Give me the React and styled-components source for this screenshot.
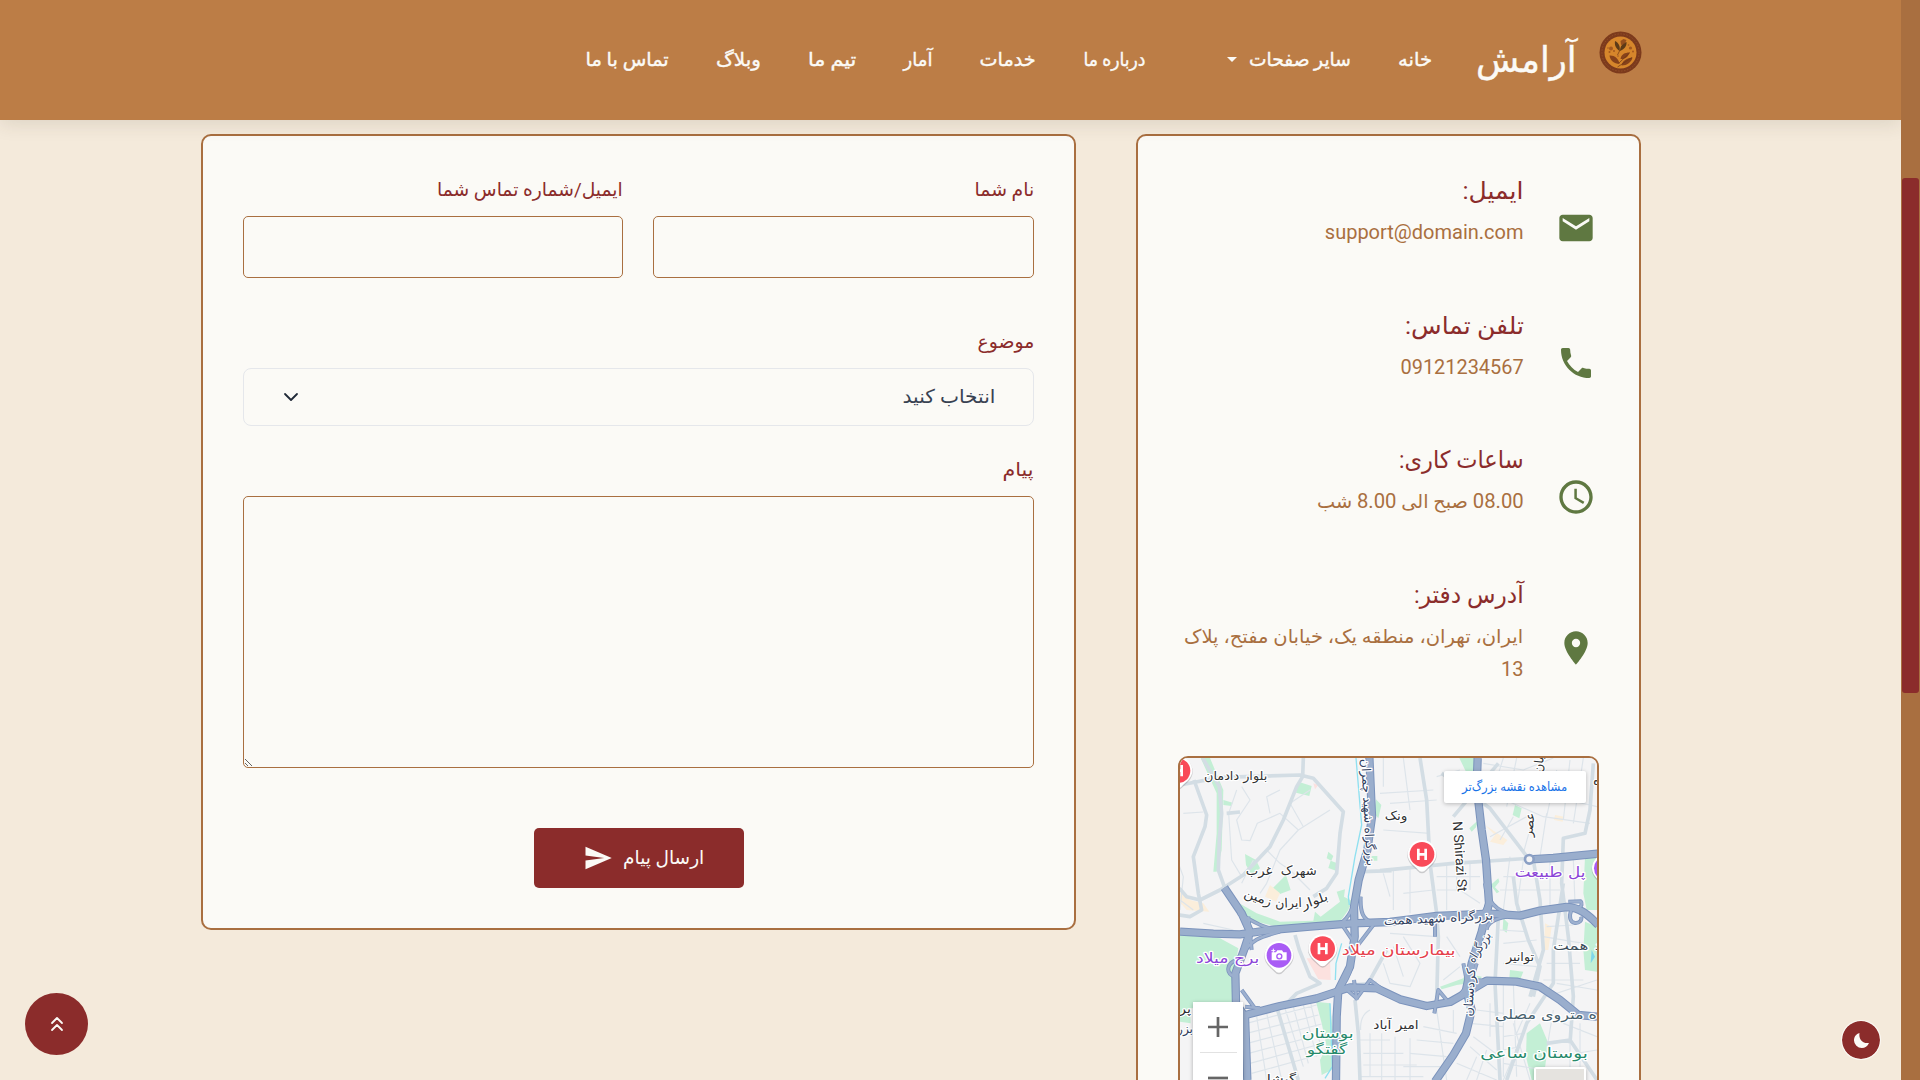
import React, { useLayoutEffect, useRef, useState } from "react";
import styled, { createGlobalStyle } from "styled-components";
import { MdEmail, MdPhone, MdAccessTime, MdLocationOn, MdSend } from "react-icons/md";

const c = {
  cream: "#f4eadb",
  paper: "#fbfaf6",
  copper: "#a96f40",
  header: "#bc7d46",
  wine: "#8b2c2b",
  green: "#5f7841",
  ink: "#374151",
};

const Global = createGlobalStyle`
  * { box-sizing: border-box; }
  html, body { margin: 0; height: 1080px; overflow: hidden; }
  body { font-family: Roboto, "DejaVu Sans", sans-serif; background: ${c.cream}; }
`;

const Page = styled.div`
  display: flex;
  direction: rtl;
  width: 1920px;
  height: 1080px;
  overflow: hidden;
  background: ${c.cream};
`;

const View = styled.div`
  position: relative;
  flex: 1;
  display: flex;
  flex-direction: column;
  min-width: 0;
  overflow: hidden;
`;

const ScrollTrack = styled.div`
  flex: none;
  width: 19px;
  height: 1080px;
  padding-top: 178px;
  background: ${c.copper};
`;

const ScrollThumb = styled.div`
  height: 515px;
  margin: 0 1px;
  background: ${c.wine};
  border-radius: 3px;
`;

/* ---------- text that occupies an exact width ---------- */
const FitBox = styled.span`
  display: inline-block;
  width: ${(p) => p.$w}px;
  white-space: nowrap;
`;
const FitInner = styled.span`
  display: inline-block;
  transform-origin: right center;
  white-space: nowrap;
`;

function Fit({ w, children }) {
  const ref = useRef(null);
  const [scale, setScale] = useState(1);
  useLayoutEffect(() => {
    setScale(w / ref.current.offsetWidth);
  }, [w]);
  return (
    <FitBox $w={w}>
      <FitInner ref={ref} style={{ transform: `scaleX(${scale})` }}>
        {children}
      </FitInner>
    </FitBox>
  );
}

/* ---------- header ---------- */
const Header = styled.header`
  display: flex;
  align-items: center;
  flex: none;
  height: 120px;
  padding-right: 259px;
  background: ${c.header};
  box-shadow: 0 4px 18px rgba(60, 50, 30, 0.12);
  z-index: 2;
`;

const Logo = styled.svg`
  flex: none;
  width: 43px;
  height: 43px;
  margin-bottom: 15px;
`;

const Brand = styled.div`
  margin: 0 22px 1px 43px;
  font-size: 36px;
  line-height: 60px;
  color: ${c.paper};
  -webkit-text-stroke: 0.4px ${c.paper};
`;

const Nav = styled.nav`
  display: flex;
  align-items: center;
  margin: 0 -22.5px 1px 0;
`;

const NavItem = styled.a`
  display: flex;
  align-items: center;
  padding: 0 23.7px;
  font-size: 19px;
  line-height: 30px;
  color: ${c.paper};
  -webkit-text-stroke: 0.4px ${c.paper};
  ${(p) => p.$wide && "padding-left: 58px;"}
`;

const Caret = styled.i`
  width: 0;
  height: 0;
  margin-right: 11px;
  border: 5px solid transparent;
  border-top-color: ${c.paper};
  border-bottom: 0;
`;

/* ---------- content ---------- */
const Main = styled.main`
  display: flex;
  align-items: flex-start;
  gap: 60px;
  padding: 14px 260px 0 201px;
`;

const Card = styled.section`
  width: ${(p) => p.$w}px;
  height: ${(p) => p.$h}px;
  padding: 40px;
  border: 2px solid ${c.copper};
  border-radius: 10px;
  background: ${c.paper};
`;

const InfoList = styled.div`
  display: flex;
  flex-direction: column;
  gap: 30.5px;
  margin-bottom: 40px;
`;

const InfoItem = styled.div`
  display: flex;
  align-items: center;
  gap: 32.5px;
  height: ${(p) => (p.$tall ? 136 : 104)}px;
  padding-right: 3px;
  color: ${c.green};
  svg { flex: none; }
`;

const InfoText = styled.div`
  align-self: flex-start;
`;

const InfoTitle = styled.h4`
  margin: 0 0 11px;
  font-size: 24px;
  font-weight: 400;
  line-height: 30px;
  color: ${c.wine};
`;

const InfoLine = styled.div`
  font-size: ${(p) => (p.$latin ? 20 : 19)}px;
  line-height: ${(p) => (p.$tall ? 32 : 31)}px;
  color: ${c.copper};
  big { font-size: 20px; }
`;

/* ---------- form ---------- */
const Row = styled.div`
  display: flex;
  gap: 30px;
  margin-bottom: 50px;
`;

const Field = styled.div`
  display: flex;
  flex-direction: column;
  flex: ${(p) => (p.$w ? "none" : 1)};
  width: ${(p) => (p.$w ? `${p.$w}px` : "auto")};
  margin-bottom: ${(p) => p.$mb || 0}px;
`;

const Label = styled.label`
  height: 28px;
  margin-bottom: 12px;
  font-size: 19px;
  line-height: 28px;
  color: ${c.wine};
`;

const Input = styled.input`
  width: 100%;
  height: 62px;
  border: 1px solid ${c.copper};
  border-radius: 5px;
  background: transparent;
  outline: none;
`;

const Select = styled.div`
  display: flex;
  align-items: center;
  justify-content: space-between;
  height: 58px;
  padding: 0 38px 1px 39px;
  border: 1px solid #e5e7eb;
  border-radius: 8px;
  font-size: 19px;
  line-height: 28px;
  color: ${c.ink};
`;

const Area = styled.textarea`
  display: block;
  width: 100%;
  height: 272px;
  border: 1px solid ${c.copper};
  border-radius: 5px;
  background: transparent;
  resize: both;
  outline: none;
`;

const Submit = styled.button`
  display: flex;
  align-items: center;
  gap: 10px;
  width: 210px;
  height: 60px;
  margin: 60px 290.5px 0 auto;
  padding: 0 39.500px 0 0;
  border: 0;
  border-radius: 5px;
  background: ${c.wine};
  color: ${c.paper};
  font: 19px Roboto, "DejaVu Sans", sans-serif;
  line-height: 28px;
`;

/* ---------- map ---------- */
const MapFrame = styled.div`
  position: relative;
  width: 421px;
  height: 450px;
  border: 2px solid ${c.copper};
  border-radius: 10px;
  overflow: hidden;
  background: #f4f4f5;
`;

const MapSvg = styled.svg`
  display: block;
  width: 417px;
  height: 322px;
  direction: ltr;
  text { font-family: "DejaVu Sans", sans-serif; paint-order: stroke; stroke: #fff; stroke-width: 7px; stroke-linejoin: round; }
`;

const BigMapLink = styled.a`
  position: absolute;
  top: 13px;
  right: 11px;
  display: flex;
  align-items: center;
  justify-content: center;
  width: 142px;
  height: 32px;
  border-radius: 2px;
  background: #fff;
  box-shadow: 0 1px 4px rgba(0, 0, 0, 0.25);
  font-size: 12.5px;
  color: #1a73e8;
`;

const ZoomBox = styled.div`
  position: absolute;
  top: 244px;
  left: 13px;
  display: flex;
  flex-direction: column;
  align-items: center;
  width: 50px;
  height: 101px;
  background: #fff;
  box-shadow: 0 1px 4px rgba(0, 0, 0, 0.3);
  svg { display: block; width: 50px; height: 50px; }
`;

const ZoomRule = styled.div`
  flex: none;
  width: 37px;
  height: 1px;
  background: #e2e2e2;
`;

const Layers = styled.div`
  position: absolute;
  top: 309px;
  right: 11px;
  width: 52px;
  height: 52px;
  border: 2px solid #fff;
  border-radius: 2px;
  background: #e5e3df;
  box-shadow: 0 1px 4px rgba(0, 0, 0, 0.3);
`;

/* ---------- floating buttons ---------- */
const Round = styled.button`
  position: absolute;
  display: flex;
  align-items: center;
  justify-content: center;
  padding: 0;
  border: ${(p) => (p.$ring ? "1px solid rgba(255,255,255,.7)" : "0")};
  border-radius: 50%;
  background: ${c.wine};
  background-clip: padding-box;
  color: ${c.paper};
`;
const TopButton = styled(Round)`
  left: 25px;
  top: 993px;
  width: 63px;
  height: 62px;
`;
const DarkButton = styled(Round)`
  left: 1841px;
  top: 1020px;
  width: 40px;
  height: 40px;
`;

const LogoMark = () => (
  <Logo viewBox="0 0 43 43">
    <circle cx="21.5" cy="21.5" r="21" fill="#7c3a1c" />
    <circle cx="21.5" cy="21.5" r="18.6" fill="none" stroke="#94502a" strokeWidth="1" strokeDasharray="1.4 1.6" />
    <circle cx="21.5" cy="21.5" r="16" fill="#d6862b" />
    <g fill="#5c3a17">
      <path d="M20.5 20C16 17 15.500 13 16 10C20 12 21.500 16 20.500 20Z" />
      <path d="M21 20C21 15 24 12 27.500 11C28 15 25 18.500 21 20Z" />
    </g>
    <g fill="#87421a">
      <path d="M10.500 24.500C15 24 19.500 27 20.500 33C15 33 11 29 10.500 24.500Z" />
      <path d="M21.500 28C22 23.500 26 21.500 30.500 21.500C29.500 25.500 26 28.500 21.500 28Z" />
      <path d="M22.500 34.500C23 30 28 27 33.500 26.500C32.500 31 28 34.500 22.500 34.500Z" />
      <path d="M21.500 10L24.500 8L27.500 9L25.500 13L22 14Z" opacity=".8" />
    </g>
    <g fill="#a3581f">
      <circle cx="12" cy="17.500" r="2" /><circle cx="10.500" cy="21" r="1" /><circle cx="15" cy="20" r="1" />
      <circle cx="31.500" cy="17" r="1.600" /><circle cx="29.500" cy="14" r=".8" /><circle cx="34" cy="20.500" r="1" />
      <circle cx="19" cy="25" r=".8" /><circle cx="9" cy="17" r=".8" />
    </g>
    <path d="M21 19L18.500 24M18.500 36L33 26.500M20 32L31 21.500" stroke="#6d3615" strokeWidth=".7" fill="none" />
  </Logo>
);

const nav = [
  ["خانه", 34],
  ["سایر صفحات", 102, true],
  ["درباره ما", 62.5],
  ["خدمات", 56.5],
  ["آمار", 28.5],
  ["تیم ما", 48],
  ["وبلاگ", 45],
  ["تماس با ما", 83.5],
];

const HIGHWAYS = [
  "M30 545L130 551L210 553L300 540L420 530L545 520L660 516L720 508L800 498L960 491L1050 497L1110 482L1190 471C1230 472 1255 495 1285 525",
  "M163 413L215 490L240 545L222 600L196 670L198 760L225 800L232 990",
  "M598 20L606 200L592 300L566 390L552 470L554 560L540 650L505 720L500 800L498 990",
  "M215 798L330 768L440 745L540 712L620 715L690 748L770 768L840 756L900 722L950 692L1040 695L1110 710L1170 750L1225 795L1281 800",
  "M923 24L920 110L935 240L948 330L957 460L935 545L905 640L888 720L905 780L888 850L850 915L795 995",
  "M1078 328L1150 324L1285 311",
];
const RAMPS = [
  "M205 490C260 520 280 535 330 540M215 620C240 570 270 560 330 545M195 680C165 670 170 640 200 630L232 590M235 500L245 600M500 525C530 515 548 480 556 440M610 518C580 510 570 490 572 440M520 530L560 590L610 525M225 770L270 775M215 720L255 775M450 745C500 740 530 700 545 650M520 710L560 745L600 690L640 720M560 750L552 690",
  "M945 400C950 450 975 485 1030 492M910 500C940 500 955 470 957 430M950 540C950 520 975 505 1010 500M793 790L805 720L830 750M880 640L890 690L960 692M865 740L905 690L920 640M795 500V560",
  "M1204 480C1196 500 1200 517 1215 519C1228 520 1236 512 1234 500M1195 455L1232 454C1237 460 1236 468 1226 474",
];
const MINOR_WIDE = [
  "M30 105L150 82L390 75L430 85L520 185L510 250L500 370L470 415L430 440",
  "M400 24L398 80L380 110L340 210L300 290L220 375L150 420L90 450L50 440L28 415",
  "M72 90L110 195L105 230L70 320L85 430L95 480L60 500L28 495M98 24L148 110L155 190L148 270L145 360L165 415M170 190L210 186",
  "M375 555L388 600L420 680L450 700L380 730L350 760M575 365L665 362M630 362L850 340L1075 325M750 24L770 150L780 340L800 490L805 560L800 750M850 200L985 40",
  "M815 70L960 175L1075 325M1270 40L1260 180L1245 250L1180 265L1175 400L1195 560L1210 740L1200 880M1030 380L1040 460L1075 570L1110 650L1090 740M1090 330L1110 450L1120 600L1080 740M555 750L565 850L570 990M320 770L385 990M985 500L975 700L990 990M540 705L620 700M600 690L650 600M1130 880L1200 870L1281 990M1010 990L1070 820L1150 700L1150 600L1180 400",
];
const GRID = [
  "M200 120L176 190L185 330L215 380M215 110L240 150L200 210L215 270L240 272L262 220L330 190L385 240L480 180M385 240L330 300L290 400L270 430M330 120L290 140L300 190M290 300L330 340L360 360L420 420M420 120L360 160L400 230M250 330L215 400M40 190L100 186M30 480L40 380L25 340M100 520L190 540M30 450L70 480",
  "M230 820L440 765M230 850L445 795M232 880L455 822M236 910L465 850M240 940L440 885M245 970L445 915M260 800L290 990M290 790L335 990M345 775L400 950M370 770L415 940M400 765L440 920M422 760L450 880",
  "M570 870H660M580 910H700M580 945H740M570 980H760M600 850V980M635 850V990M675 860V990M720 865V990M600 780C580 790 570 810 572 840M640 20V110M660 160L800 150M700 24L720 180M800 80L870 60M630 130L790 120M640 240L780 250M640 370L660 440M670 360V480M720 350V490M700 430L790 420M830 340V480M800 380H930M800 420H870L930 460M860 350V420M900 340V420",
  "M640 640L660 700L720 710L750 640L700 560M660 550L800 560M670 590L700 680M830 560L870 620M820 690L870 650M800 780L830 990M760 830L860 850M740 870L850 880M720 910L830 920M700 950L810 950M850 780V850M910 860L990 920M900 890L980 960M920 920L890 990M950 900L920 990M960 760V860M1000 700V980M1030 700L1040 980M900 820L1000 830M920 780L1000 790M1000 860L1060 850M1000 900L1050 890M1000 940L1120 960M860 940L980 990",
  "M940 40L1060 60L1150 24M970 90L1110 130L1281 170M960 130L1120 200L1260 220M1000 24L960 150M1040 24L1010 170M1160 60L1130 200M1200 30L1180 210M1240 24L1210 220M1090 200L1060 310M1130 190L1110 320M1030 200L990 270M960 260L1070 200M1020 320L1000 480M1060 330L1040 480M1140 330V470M1210 330L1215 460M990 420H1170M1000 380H1180M990 540L1070 545M1000 580L1100 570M1000 640L1100 650M1130 530L1210 525M1120 560L1240 580M1130 640H1230M1120 690H1240M1130 740L1281 690M1030 820L1080 990M1150 780L1130 900M1180 820L1281 860M1160 920L1281 900M1060 850L1000 990M1200 830V960M1230 820V950M1080 760L1040 850M1160 700L1281 720",
];

const T = ({ x, y, len, size = 37, fill = "#2f3133", rot, children }) => (
  <text
    x={x}
    y={y}
    fontSize={size}
    fill={fill}
    textAnchor="middle"
    textLength={len}
    lengthAdjust="spacingAndGlyphs"
    transform={rot ? `rotate(${rot} ${x} ${y})` : undefined}
  >
    {children}
  </text>
);

const Pin = ({ x, y, fill, children }) => (
  <g transform={`translate(${x} ${y})`}>
    <path d="M-44 0A44 44 0 1 1 44 0C44 22 24 36 14 46Q0 62 -14 46C-24 36 -44 22 -44 0Z" fill="#7a7a80" opacity=".35" transform="translate(0 3)" />
    <path d="M-43 0A43 43 0 1 1 43 0C43 21 24 34 13 45Q0 60 -13 45C-24 34 -43 21 -43 0Z" fill="#fff" />
    <circle r="37" fill={fill} />
    {children}
  </g>
);
const HMark = () => <path d="M-11 -17V17M11 -17V17M-11 0H11" stroke="#fff" strokeWidth="8" fill="none" />;

const CityMap = () => (
  <MapSvg viewBox="30 24 1251 966">
    <rect x="30" y="24" width="1251" height="966" fill="#f4f4f5" />
    <g fill="#c3efd5">
      <path d="M30 555L150 565L205 595L190 680L195 770L60 775L62 820L30 815Z" />
      <path d="M92 24H120L160 120L155 300L140 365H130L140 250L140 130ZM160 150L188 158L185 168L160 165Z" />
      <path d="M385 95L425 108L418 138L378 128ZM225 312L258 330L270 355L245 375L228 345ZM348 375L362 420L330 432L308 415ZM475 305L490 318L484 332L470 325ZM482 332L502 340L498 362L475 354Z" />
      <path d="M200 455L260 490L330 515L430 512L435 485L452 500L510 455L500 425L525 418L522 440L545 452L535 480L510 515L320 530L240 510Z" />
      <path d="M438 755L480 760L490 860L485 960L455 975L450 930L470 890L455 820ZM618 148L634 165L625 205L612 190ZM605 318H622V332H605Z" />
      <path d="M868 24H915L912 90L890 70ZM1035 165L1055 175L1048 205L1028 195ZM898 235L925 210L918 232L905 245ZM962 405L985 385L988 395L975 412L988 425L980 430Z" />
      <path d="M1245 320H1281V480H1250L1240 430ZM1245 515L1281 530V665L1245 660L1240 600ZM1000 505L1015 520L1010 548L998 540ZM1020 660L1060 665L1050 690L1018 685ZM810 710L880 685L885 670L935 680L930 695L860 705L815 718Z" />
      <path d="M1070 850L1110 820L1135 880L1120 990H1085L1068 920Z" />
    </g>
    <g fill="#fbeedb">
      <path d="M300 405L330 430L318 455L285 440ZM28 425L60 450L100 460L118 485L50 480L28 455ZM945 225L1012 270L1000 285L960 275L975 255ZM1125 520L1145 530L1135 600L1122 600ZM1155 195L1182 200L1178 215L1152 210Z" />
    </g>
    <path d="M410 625L480 625L482 690L445 688Z M430 100L445 105L435 118Z" fill="#fce1df" />
    <path d="M1265 600L1275 620L1262 640Z" fill="#7fd7ea" />
    <g fill="none" strokeLinejoin="round">
      {GRID.map((d) => <path key={d} d={d} stroke="#dde4ea" strokeWidth="3.500" />)}
      {MINOR_WIDE.map((d) => <path key={d} d={d} stroke="#d3dde4" strokeWidth="11" />)}
      <path d="M558 24L575 225L555 320L535 440L538 465M515 580L498 640L496 690M480 760L487 950L465 985" stroke="#8fe0f0" strokeWidth="4" />
      <g strokeLinecap="butt">
        {RAMPS.map((d) => <path key={d} d={d} stroke="#7f97bf" strokeWidth="12" />)}
        {HIGHWAYS.map((d) => <path key={d} d={d} stroke="#7b93bc" strokeWidth="25" />)}
        {RAMPS.map((d) => <path key={d} d={d} stroke="#9db0cf" strokeWidth="7" />)}
        {HIGHWAYS.map((d) => <path key={d} d={d} stroke="#9aaecd" strokeWidth="19" />)}
      </g>
      <circle cx="1078" cy="328" r="13" stroke="#8ba0c5" strokeWidth="8" fill="#f4f4f5" />
    </g>

    <T x={197} y={90} len={190}>بلوار دادمان</T>
    <T x={334} y={374} len={213}>شهرک&nbsp; غرب</T>
    <T x={438} y={464} len={82} size={38} rot={-20}>بلوار</T>
    <T x={356} y={472} len={80} size={38} rot={-2}>ایران</T>
    <T x={260} y={454} len={86} size={38} rot={20}>زمین</T>
    <T x={582} y={188} len={322} rot={87} fill="#33425f">بزرگراه شهید چمران</T>
    <T x={173} y={638} len={190} size={42} fill="#8c45d8">برج میلاد</T>
    <T x={686} y={616} len={342} size={42} fill="#e5404b">بیمارستان میلاد</T>
    <T x={678} y={210} len={68}>ونک</T>
    <T x={806} y={517} len={328} rot={-3} fill="#33425f">بزرگراه شهید همت</T>
    <T x={938} y={598} len={100} rot={-58} fill="#33425f">بزرگراه</T>
    <T x={911} y={728} len={145} rot={-86} fill="#33425f">کردستان</T>
    <T x={1050} y={633} len={84}>توانیر</T>
    <T x={1140} y={380} len={212} size={42} fill="#8c45d8">پل طبیعت</T>
    <T x={1202} y={600} len={106} fill="#3d4f5c">همت</T>
    <T x={1284} y={600} len={20} fill="#3d4f5c">د</T>
    <T x={1128} y={806} len={306} size={39} fill="#46606d">ه متروی مصلی</T>
    <T x={1092} y={924} len={323} size={42} fill="#26896a">بوستان ساعی</T>
    <T x={678} y={838} len={136}>امیر آباد</T>
    <T x={473} y={864} len={156} size={40} fill="#26896a">بوستان</T>
    <T x={471} y={911} len={122} size={40} fill="#26896a">گفتگو</T>
    <T x={334} y={998} len={88}>گیشا</T>
    <T x={1090} y={225} len={72} rot={-84}>عصر</T>
    <T x={1121} y={22} len={95} rot={-84}>خیابان</T>
    <T x={1280} y={104} len={22}>ه</T>
    <T x={45} y={788} len={36}>پر</T>
    <T x={45} y={850} len={48} fill="#33425f">بزر</T>
    <g transform="rotate(86 858 320)">
      <text x="858" y="322" fontSize="40" textAnchor="middle" textLength="212" lengthAdjust="spacingAndGlyphs" fill="#2f3133" style={{ fontFamily: "Roboto, sans-serif" }}>N Shirazi St</text>
    </g>

    <Pin x={24} y={62} fill="#f94a59"><HMark /></Pin>
    <Pin x={458} y={596} fill="#f94a59"><HMark /></Pin>
    <Pin x={756} y={313} fill="#f94a59"><HMark /></Pin>
    <Pin x={1309} y={355} fill="#a95cf5" />
    <Pin x={327} y={616} fill="#a95cf5">
      <path d="M-22 -9H-9L-5 -15H9L13 -9H23V15H-22Z" fill="#fff" />
      <circle cx="1" cy="3" r="7.500" fill="none" stroke="#a95cf5" strokeWidth="4" />
      <path d="M-17 -20V-8M-23 -14H-11" stroke="#fff" strokeWidth="3" />
    </Pin>
  </MapSvg>
);

export default function App() {
  return (
    <Page>
      <Global />
      <ScrollTrack><ScrollThumb /></ScrollTrack>
      <View>
        <Header>
          <LogoMark />
          <Brand><Fit w={101}>آرامش</Fit></Brand>
          <Nav>
            {nav.map(([label, w, wide]) => (
              <NavItem key={label} $wide={wide}>
                <Fit w={w}>{label}</Fit>
                {wide && <Caret />}
              </NavItem>
            ))}
          </Nav>
        </Header>

        <Main>
          <Card $w={505} $h={1120}>
            <InfoList>
              <InfoItem>
                <MdEmail size={40} />
                <InfoText>
                  <InfoTitle><Fit w={60.5}>ایمیل:</Fit></InfoTitle>
                  <InfoLine $latin><Fit w={199}>support@domain.com</Fit></InfoLine>
                </InfoText>
              </InfoItem>
              <InfoItem>
                <MdPhone size={40} />
                <InfoText>
                  <InfoTitle><Fit w={119}>تلفن تماس:</Fit></InfoTitle>
                  <InfoLine $latin><Fit w={123.5}>09121234567</Fit></InfoLine>
                </InfoText>
              </InfoItem>
              <InfoItem>
                <MdAccessTime size={40} />
                <InfoText>
                  <InfoTitle><Fit w={125}>ساعات کاری:</Fit></InfoTitle>
                  <InfoLine><Fit w={207}><big>08.00</big> صبح الی <big>8.00</big> شب</Fit></InfoLine>
                </InfoText>
              </InfoItem>
              <InfoItem $tall>
                <MdLocationOn size={40} />
                <InfoText>
                  <InfoTitle><Fit w={110}>آدرس دفتر:</Fit></InfoTitle>
                  <InfoLine $tall><Fit w={339}>ایران، تهران، منطقه یک، خیابان مفتح، پلاک</Fit></InfoLine>
                  <InfoLine $latin $tall>13</InfoLine>
                </InfoText>
              </InfoItem>
            </InfoList>
            <MapFrame>
              <CityMap />
              <BigMapLink><Fit w={105}>مشاهده نقشه بزرگ‌تر</Fit></BigMapLink>
              <ZoomBox>
                <svg viewBox="0 0 50 50"><path d="M25 15V35M15 25H35" stroke="#666" strokeWidth="2.700" /></svg>
                <ZoomRule />
                <svg viewBox="0 0 50 50"><path d="M15 25H35" stroke="#666" strokeWidth="2.700" /></svg>
              </ZoomBox>
              <Layers />
            </MapFrame>
          </Card>

          <Card $w={875} $h={796}>
            <Row>
              <Field $w={381}><Label><Fit w={59.5}>نام شما</Fit></Label><Input /></Field>
              <Field><Label><Fit w={186}>ایمیل/شماره تماس شما</Fit></Label><Input /></Field>
            </Row>
            <Field $mb={30}>
              <Label><Fit w={56.5}>موضوع</Fit></Label>
              <Select>
                <Fit w={92.5}>انتخاب کنید</Fit>
                <svg width="16" height="10" viewBox="0 0 16 10" fill="none"><path d="M2 2L8 8L14 2" stroke="#1f2937" strokeWidth="1.800" strokeLinecap="round" strokeLinejoin="round" /></svg>
              </Select>
            </Field>
            <Field><Label><Fit w={31.5}>پیام</Fit></Label><Area /></Field>
            <Submit>
              <Fit w={81}>ارسال پیام</Fit>
              <MdSend size={30} />
            </Submit>
          </Card>
        </Main>

        <TopButton>
          <svg width="14" height="16" viewBox="0 0 14 16" fill="none" stroke="currentColor" strokeWidth="1.800" strokeLinecap="round" strokeLinejoin="round">
            <path d="M2 7L7 2L12 7M2 14L7 9L12 14" />
          </svg>
        </TopButton>
        <DarkButton $ring>
          <svg width="17" height="17" viewBox="0 0 17 17" fill="currentColor">
            <path d="M6.500 1C5.500 6.500 9 12 16 11C14.500 14.500 12 16 8.800 16A7.800 7.800 0 0 1 1 8.400C1 5 3 2 6.500 1Z" />
          </svg>
        </DarkButton>
      </View>
    </Page>
  );
}
